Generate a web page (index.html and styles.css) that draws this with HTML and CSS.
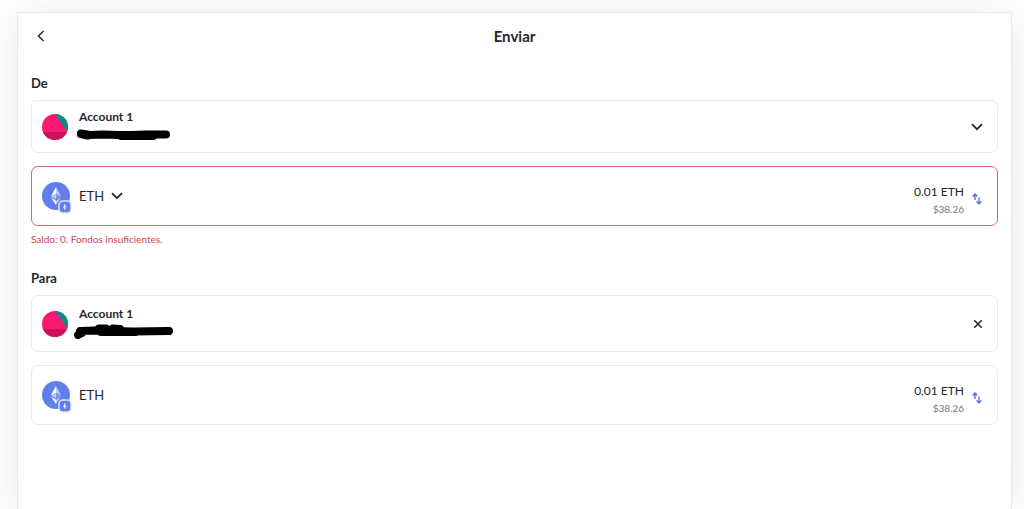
FILE: index.html
```html
<!DOCTYPE html>
<html lang="es">
<head>
<meta charset="UTF-8" />
<meta name="viewport" content="width=device-width, initial-scale=1.0">
<title>Enviar</title>
<link rel="stylesheet" href="styles.css">
</head>
<body>
<!-- Shared icons -->
<svg class="sprite" aria-hidden="true">
  <symbol id="avatar" viewBox="0 0 26 26">
    <clipPath id="round"><circle cx="13" cy="13" r="13" /></clipPath>
    <g clip-path="url(#round)">
      <rect width="26" height="26" fill="#fb1872" />
      <path d="M12.5 -1L27 20V-1z" fill="#018e86" />
      <path d="M0 18H24.5L27 20V26H0z" fill="#c8145b" />
    </g>
  </symbol>
  <symbol id="eth" viewBox="0 0 28 28">
    <circle cx="14" cy="14" r="14" fill="#627eea" />
    <path d="M14 5V11.800L19 14.200z" fill="#c0cbf7" />
    <path d="M14 5L9 14.200L14 11.800z" fill="#fff" />
    <path d="M14 17.500L19 14.200L14 11.800z" fill="#8197ee" />
    <path d="M9 14.200L14 17.500V11.800z" fill="#c0cbf7" />
    <path d="M14 18.700V23L19 15.400z" fill="#c0cbf7" />
    <path d="M14 23V18.700L9 15.400z" fill="#fff" />
  </symbol>
  <symbol id="network" viewBox="0 0 14 14">
    <rect x="1" y="1" width="12" height="12" rx="4" fill="#627eea" stroke="#dfe5fb" stroke-width="1.500" />
    <path d="M7 3.500L5.200 7.200L7 10.500z" fill="#e6ebfd" />
    <path d="M7 3.500L8.800 7.200L7 10.500z" fill="#a5b5f4" />
  </symbol>
  <symbol id="chevron" viewBox="0 0 12 8">
    <path d="M1 1.200L6 6.200L11 1.200" fill="none" stroke="#24272a" stroke-width="1.700" />
  </symbol>
  <symbol id="swap" viewBox="0 0 10 14">
    <path d="M3 8V2M0.600 4.400L3 2L5.400 4.400M7 5.500V11.800M4.600 9.400L7 11.800L9.400 9.400" fill="none" stroke="#5a6cf5" stroke-width="1.400" />
  </symbol>
</svg>

<main class="send-page">
  <header class="header">
    <button class="back" aria-label="Volver">
      <svg width="8" height="12" viewBox="0 0 8 12"><path d="M6.500 1L1.500 6L6.500 11" fill="none" stroke="#24272a" stroke-width="1.500" /></svg>
    </button>
    <h1>Enviar</h1>
  </header>

  <section class="group">
    <h2>De</h2>
    <button class="box account">
      <svg class="avatar"><use href="#avatar" /></svg>
      <span class="account-info">
        <span class="account-name">Account 1</span>
        <svg class="scribble" width="98" height="16" viewBox="0 0 98 16">
          <path d="M8 7.500L17 9L30 8.500L45 9L58 9L72 8.500L93 8.500" />
          <path d="M8 8L15 9.500M48 10H80" />
        </svg>
      </span>
      <svg class="chevron"><use href="#chevron" /></svg>
    </button>

    <div class="box asset error">
      <button class="asset-picker">
        <span class="token">
          <svg class="token-icon"><use href="#eth" /></svg>
          <svg class="network-badge"><use href="#network" /></svg>
        </span>
        <span>ETH</span>
        <svg class="chevron"><use href="#chevron" /></svg>
      </button>
      <div class="amount">
        <label class="amount-main"><input type="text" value="0.01" aria-label="Importe"> ETH</label>
        <span class="fiat">$38.26</span>
      </div>
      <button class="swap" aria-label="Cambiar moneda"><svg><use href="#swap" /></svg></button>
    </div>
    <p class="error-text">Saldo: 0. Fondos insuficientes.</p>
  </section>

  <section class="group">
    <h2>Para</h2>
    <div class="box account recipient">
      <svg class="avatar"><use href="#avatar" /></svg>
      <span class="account-info">
        <span class="account-name">Account 1</span>
        <svg class="scribble" width="102" height="16" viewBox="0 0 102 16">
          <path d="M5 12L9 10L7 8L22 7.500L40 8L60 8.500L96 8" />
          <path d="M26 5.500H33M28 9H62M40 5.500L47 6" />
        </svg>
      </span>
      <button class="clear" aria-label="Borrar">
        <svg width="10" height="10" viewBox="0 0 10 10"><path d="M1.200 1.200L8.800 8.800M8.800 1.200L1.200 8.800" stroke="#24272a" stroke-width="1.500" /></svg>
      </button>
    </div>

    <div class="box asset">
      <div class="asset-picker">
        <span class="token">
          <svg class="token-icon"><use href="#eth" /></svg>
          <svg class="network-badge"><use href="#network" /></svg>
        </span>
        <span>ETH</span>
      </div>
      <div class="amount">
        <span class="amount-main">0,01 ETH</span>
        <span class="fiat">$38.26</span>
      </div>
      <button class="swap" aria-label="Cambiar moneda"><svg><use href="#swap" /></svg></button>
    </div>
  </section>
</main>
</body>
</html>
```
FILE: styles.css
```css
* {
  box-sizing: border-box;
}

body {
  display: flex;
  margin: 0;
  padding: 12px 12px 0 17px;
  min-height: 100vh;
  font-family: Lato, "Open Sans", sans-serif;
  font-size: 13px;
  line-height: 18px;
  color: #24272a;
  background: #fff;
}

button {
  padding: 0;
  border: none;
  background: none;
  font: inherit;
  color: inherit;
  text-align: left;
  cursor: pointer;
}

svg {
  display: block;
}

h1, h2, p {
  margin: 0;
}

.sprite {
  position: absolute;
  width: 0;
  height: 0;
}

.send-page {
  flex: 1;
  padding: 0 13px;
  border: 1px solid #e6e8ea;
  border-bottom: none;
  background: #fff;
  box-shadow: 0 4px 40px rgba(20, 24, 30, 0.09);
}

.header {
  display: grid;
  grid-template-columns: 24px 1fr 24px;
  align-items: center;
  height: 46px;
}

.header h1 {
  font-size: 15px;
  line-height: 18px;
  text-align: center;
}

.back {
  padding: 4px 6px;
}

.group {
  padding-top: 15px;
}

.group h2 {
  font-size: 13px;
  margin-bottom: 8px;
}

.box {
  display: flex;
  align-items: center;
  width: 100%;
  border: 1px solid #e8eaec;
  border-radius: 7px;
  background: #fff;
  padding: 0 14px 0 10px;
  margin-bottom: 13px;
}

.account {
  height: 53px;
  gap: 11px;
}

.recipient {
  height: 57px;
}

.avatar {
  width: 26px;
  height: 26px;
}

.account-info {
  flex: 1;
  padding-bottom: 3px;
}

.account-name {
  display: block;
  font-size: 12px;
  font-weight: bold;
}

.scribble {
  margin-left: -6px;
}

.scribble path {
  fill: none;
  stroke: #000;
  stroke-width: 8;
  stroke-linecap: round;
  stroke-linejoin: round;
}

.chevron {
  width: 12px;
  height: 8px;
}

.asset {
  height: 60px;
}

.asset.error {
  border-color: #d5616d;
  margin-bottom: 4px;
}

.asset-picker {
  display: flex;
  align-items: center;
  gap: 7px;
}

.token {
  position: relative;
  margin-right: 2px;
}

.token-icon {
  width: 28px;
  height: 28px;
}

.network-badge {
  position: absolute;
  right: -2px;
  bottom: -4px;
  width: 14px;
  height: 14px;
}

.amount {
  margin-left: auto;
  padding-top: 8px;
  text-align: right;
}

.amount-main {
  display: block;
  font-size: 12px;
}

.amount-main input {
  width: 32px;
  height: 18px;
  padding: 0;
  border: none;
  outline: none;
  background: none;
  font: inherit;
  color: inherit;
  text-align: right;
}

.fiat {
  display: block;
  font-size: 10px;
  line-height: 16px;
  color: #747a82;
}

.swap {
  margin: 6px 0 0 8px;
  padding-right: 1px;
}

.swap svg {
  width: 10px;
  height: 14px;
}

.error-text {
  margin-bottom: 6px;
  font-size: 10px;
  color: #cf4453;
}
```
